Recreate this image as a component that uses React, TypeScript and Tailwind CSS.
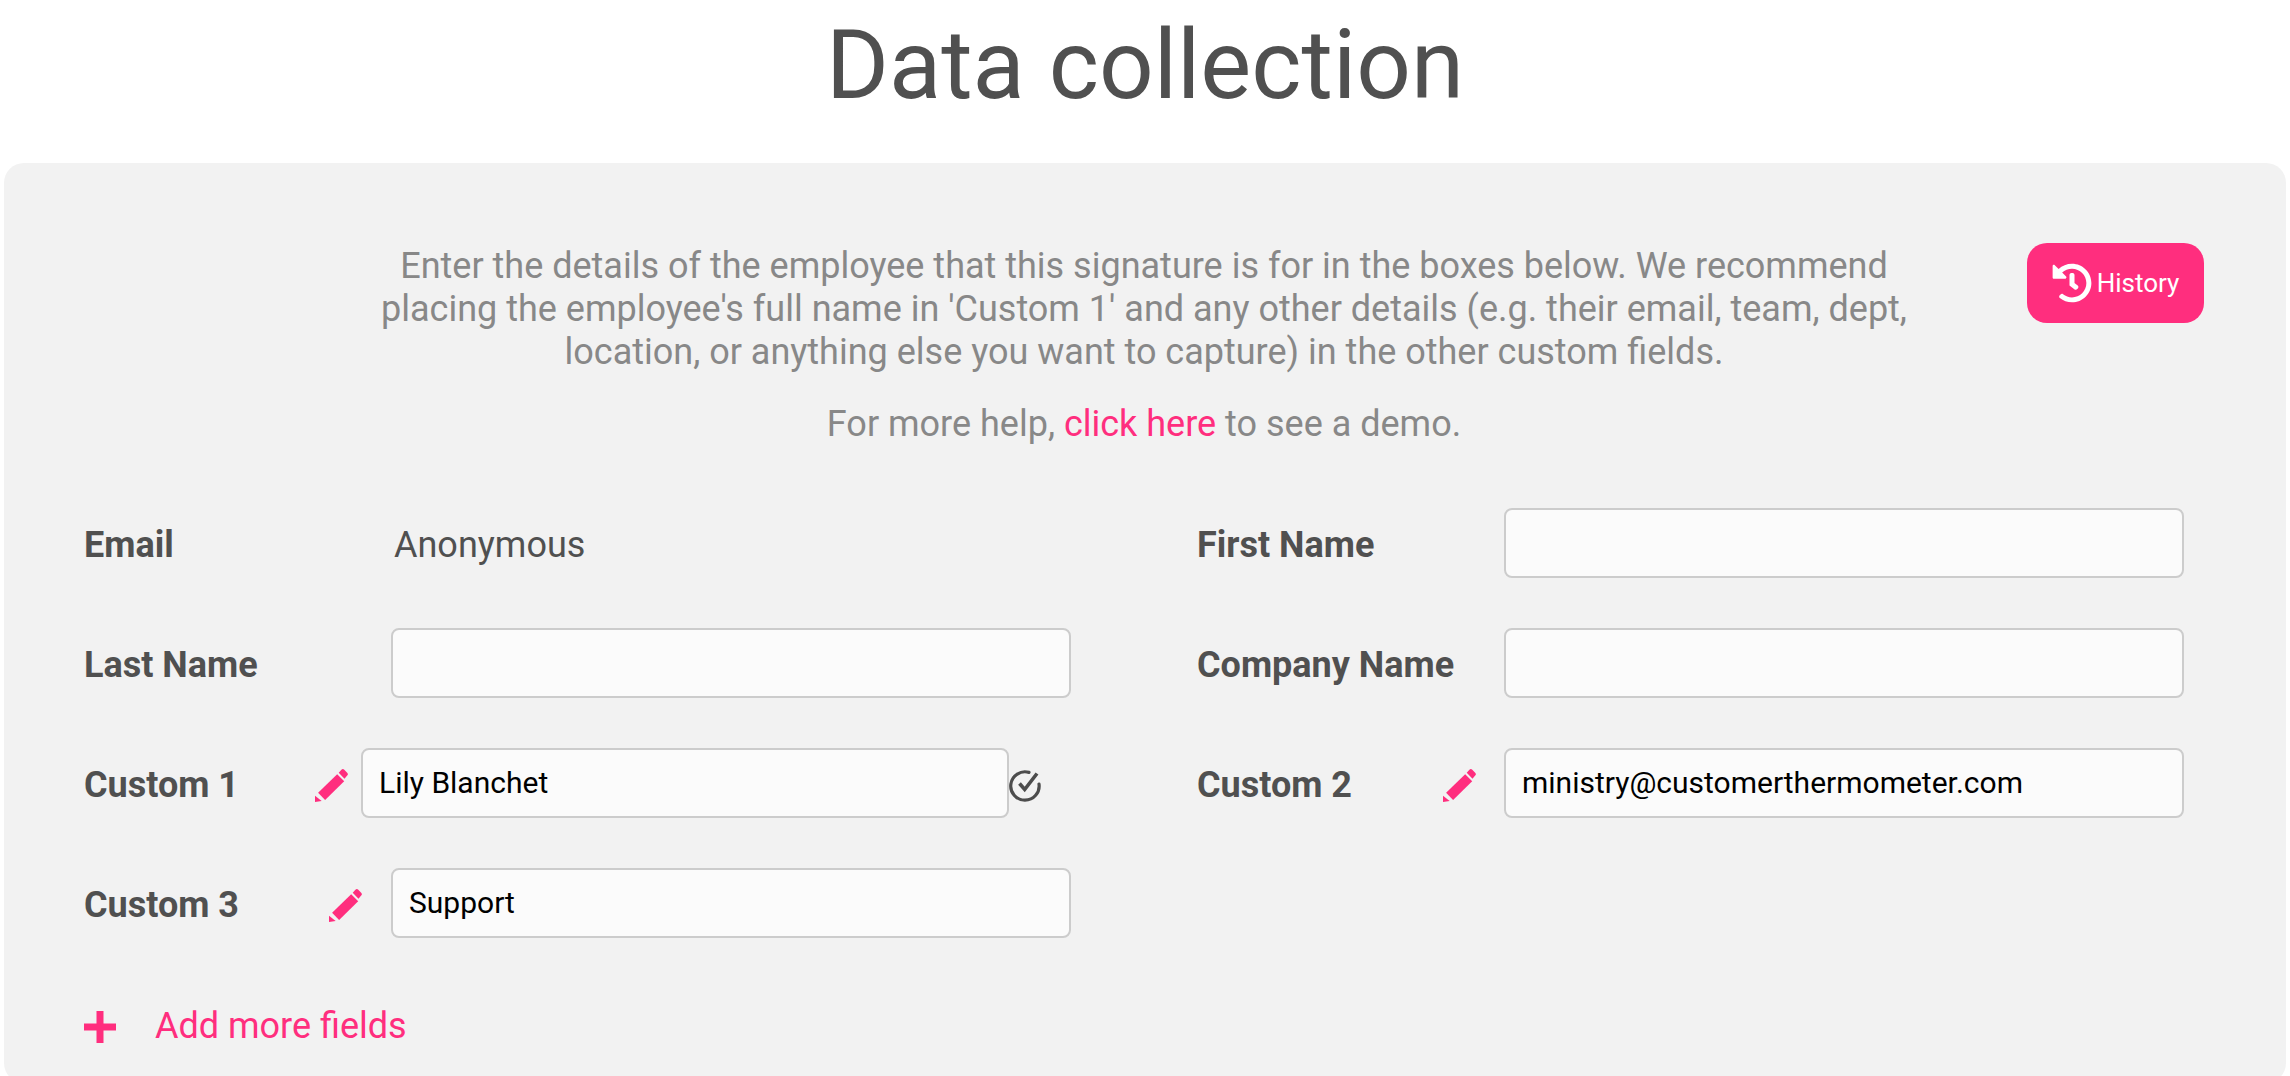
import React from "react";
import { FaHistory } from "react-icons/fa";

function Label({ children }: { children: React.ReactNode }) {
  return <span className="flex-1 pt-[3px] text-[36px] leading-[44px] font-bold text-[#505050]">{children}</span>;
}

function Field({ value = "", className = "w-[680px]" }: { value?: string; className?: string }) {
  return (
    <input
      readOnly
      value={value}
      className={`h-[70px] rounded-[8px] border-2 border-[#cccccc] bg-[#fbfbfb] px-[16px] pb-[2px] text-[30px] text-black outline-none ${className}`}
    />
  );
}

function Pencil({ className }: { className: string }) {
  return (
    <svg viewBox="0 0 32 32" className={`mt-[4px] size-[33px] shrink-0 ${className}`} fill="#ff2e7e">
      <path d="M3 23 21.5 5l6.8 6.8L9.8 30z" />
      <path d="M0 32v-6l6.5 5z" />
      <path d="M23 3.6 25.6.8a2 2 0 0 1 2.8 0l2.8 2.8a2 2 0 0 1 0 2.8l-2.6 3z" />
    </svg>
  );
}

function CheckDone() {
  return (
    <svg viewBox="0 0 32 32" className="mt-[6px] size-[32px] shrink-0" fill="none" stroke="#4d4d4d" strokeWidth="3.2">
      <path d="M20 2.4A14.2 14.2 0 1 0 30 14" strokeLinecap="round" />
      <path d="M10.5 13.5 15.7 19.5 28 3.5" strokeWidth="3.6" />
    </svg>
  );
}

export default function App() {
  return (
    <div className="h-[1076px] overflow-hidden bg-white font-['Roboto',sans-serif]">
      <h1 className="pt-[4px] text-center text-[96px] leading-[122px] font-normal text-[#505050]">Data collection</h1>
      <div className="relative mx-[4px] mt-[37px] h-[920px] rounded-[20px] bg-[#f2f2f2] pr-[82px] pl-[80px]">
        <button className="absolute top-[80px] right-[82px] flex h-[80px] w-[177px] items-center justify-center gap-[5px] rounded-[20px] bg-[#ff2e7e] text-[26px] text-white">
          <FaHistory className="size-[40px]" />
          History
        </button>
        <div className="pt-[82px] text-center text-[36px] leading-[43px] text-[#888888]">
          <p>
            Enter the details of the employee that this signature is for in the boxes below. We recommend
            <br />
            placing the employee's full name in 'Custom 1' and any other details (e.g. their email, team, dept,
            <br />
            location, or anything else you want to capture) in the other custom fields.
          </p>
          <p className="mt-[29px]">
            For more help, <span className="text-[#ff2e7e]">click here</span> to see a demo.
          </p>
        </div>
        <div className="mt-[62px] grid w-[2100px] grid-cols-[987px_987px] gap-x-[126px] gap-y-[50px]">
          <div className="flex h-[70px] items-center">
            <Label>Email</Label>
            <span className="w-[677px] pt-[3px] text-[36px] text-[#505050]">Anonymous</span>
          </div>
          <div className="flex items-center">
            <Label>First Name</Label>
            <Field />
          </div>
          <div className="flex items-center">
            <Label>Last Name</Label>
            <Field />
          </div>
          <div className="flex items-center">
            <Label>Company Name</Label>
            <Field />
          </div>
          <div className="flex items-center pr-[30px]">
            <Label>Custom 1</Label>
            <Pencil className="mr-[13px]" />
            <Field value="Lily Blanchet" className="w-[648px]" />
            <CheckDone />
          </div>
          <div className="flex items-center">
            <Label>Custom 2</Label>
            <Pencil className="mr-[28px]" />
            <Field value="ministry@customerthermometer.com" />
          </div>
          <div className="flex items-center">
            <Label>Custom 3</Label>
            <Pencil className="mr-[29px]" />
            <Field value="Support" />
          </div>
        </div>
        <div className="mt-[61px] flex items-center gap-[39px] text-[36px] text-[#ff2e7e]">
          <svg viewBox="0 0 32 32" className="mt-[2px] size-[32px]" fill="#ff2e7e">
            <path d="M12.5 0h7v12.5H32v7H19.5V32h-7V19.5H0v-7h12.5z" />
          </svg>
          Add more fields
        </div>
      </div>
    </div>
  );
}
